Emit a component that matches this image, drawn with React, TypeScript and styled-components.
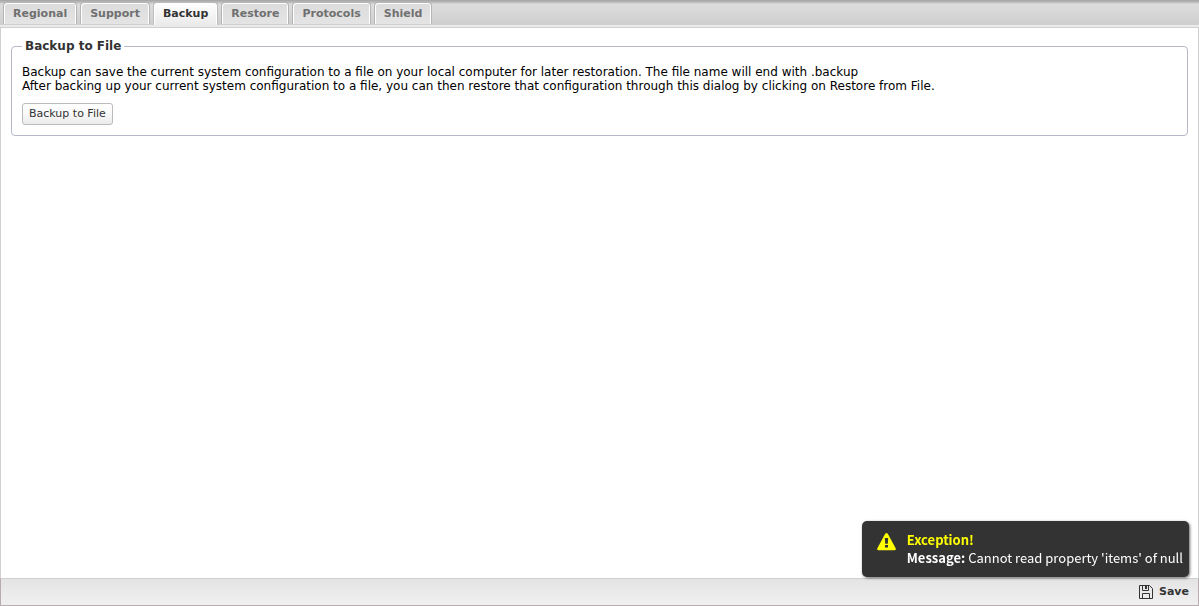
import React, { useState } from "react";
import styled, { createGlobalStyle } from "styled-components";

const GlobalStyle = createGlobalStyle`
  * { box-sizing: border-box; }
  body {
    margin: 0;
    background: #fff;
    font-family: "DejaVu Sans", Verdana, sans-serif;
    font-size: 12px;
    line-height: 14px;
    color: #000;
  }
`;

const Page = styled.div`
  display: flex;
  flex-direction: column;
  min-height: 100vh;
`;

const TabStrip = styled.nav`
  display: flex;
  align-items: flex-end;
  gap: 3px;
  height: 25px;
  padding: 0 3px;
  border-top: 1px solid #a9a9a9;
  border-bottom: 1px solid #d0d0d0;
  background: linear-gradient(#b4b4b4 0, #b4b4b4 1px, #dddddd 3px, #cfcfcf 100%);
`;

const Tab = styled.button<{ $active: boolean }>`
  height: ${(p) => (p.$active ? 23 : 22)}px;
  margin-bottom: ${(p) => (p.$active ? -1 : 0)}px;
  padding: 0 9px ${(p) => (p.$active ? 2 : 0)}px;
  border: 1px solid ${(p) => (p.$active ? "#bcbcbc" : "#b5b5b5")};
  border-bottom: 0;
  border-radius: 4px 4px 0 0;
  background: ${(p) => (p.$active ? "linear-gradient(#ffffff, #eaeaea)" : "linear-gradient(#dcdcdc, #e4e4e4)")};
  box-shadow: inset 1px 1px 0 #fff, inset -1px 0 0 #fff;
  color: ${(p) => (p.$active ? "#333" : "#707070")};
  font: bold 11px/13px "DejaVu Sans", Verdana, sans-serif;
`;

const StripEdge = styled.div`
  height: 3px;
  background: #eaeaea;
  border-bottom: 1px solid #d0d0d0;
`;

const Content = styled.main`
  flex: 1;
  padding: 11px 10px;
  border: solid #d0d0d0;
  border-width: 0 1px;
`;

const Group = styled.fieldset`
  min-width: 0;
  margin: 0;
  padding: 12px 10px 10px;
  border: 1px solid #b5b8c8;
  border-radius: 4px;
`;

const Legend = styled.legend`
  padding: 0 3px;
  color: #333;
  font-weight: bold;
`;

const Description = styled.p`
  margin: 0 0 10px;
`;

const BackupButton = styled.button`
  display: block;
  height: 22px;
  padding: 0 6px 2px;
  border: 1px solid #bbb;
  border-radius: 3px;
  background: linear-gradient(#ffffff, #f8f8f8 50%, #ebebeb);
  color: #333;
  font: 11px/13px "DejaVu Sans", Verdana, sans-serif;
`;

const Footer = styled.footer`
  display: flex;
  align-items: center;
  justify-content: flex-end;
  height: 28px;
  padding: 0 9px;
  border: 1px solid #b8acb0;
  border-top-color: #d0d0d0;
  background: linear-gradient(#e4e4e4, #f0f0f0);
`;

const SaveButton = styled.button`
  display: flex;
  align-items: center;
  gap: 6px;
  padding: 0;
  border: 0;
  background: none;
  color: #333;
  font: bold 11px/14px "DejaVu Sans", Verdana, sans-serif;
`;

const Toast = styled.div`
  position: fixed;
  right: 10px;
  bottom: 29px;
  display: flex;
  gap: 10px;
  padding: 10px 6px 10px 14px;
  border-radius: 5px;
  background: #333;
  box-shadow: 1px 1px 3px rgba(0, 0, 0, 0.6);
  color: #fff;
  font: 13px/18px "Noto Sans CJK SC", sans-serif;
`;

const ToastTitle = styled.strong`
  display: block;
  color: #ff0;
`;

const WarningIcon = () => (
  <svg width="21" height="20" viewBox="0 0 21 20" aria-hidden="true">
    <path
      fill="#ff0"
      fillRule="evenodd"
      d="M9.2 2.8Q10.5 1 11.8 2.8L19.8 17.4Q20.3 19 18.7 19.2H2.3Q.7 19 1.2 17.4ZM8.8 7L9.2 12.8H11.8L12.2 7ZM9 14.1V16.6H12V14.1Z"
    />
  </svg>
);

const SaveIcon = () => (
  <svg width="14" height="14" viewBox="0 0 14 14" fill="none" stroke="#333" aria-hidden="true">
    <path d="M.5.5H10.5L13.5 3.5V13.5H.5ZM3.5 13.5V8.5H10.5V13.5M3.5.5V5.5H9.5V.5" />
    <path fill="#333" stroke="none" d="M6 1H8V4H6Z" />
  </svg>
);

const tabs = ["Regional", "Support", "Backup", "Restore", "Protocols", "Shield"];

export default function App() {
  const [active, setActive] = useState("Backup");
  return (
    <Page>
      <GlobalStyle />
      <TabStrip role="tablist">
        {tabs.map((name) => (
          <Tab key={name} role="tab" aria-selected={name === active} $active={name === active} onClick={() => setActive(name)}>
            {name}
          </Tab>
        ))}
      </TabStrip>
      <StripEdge />
      <Content>
        <Group>
          <Legend>Backup to File</Legend>
          <Description>
            Backup can save the current system configuration to a file on your local computer for later restoration. The file name will end with .backup
            <br />
            After backing up your current system configuration to a file, you can then restore that configuration through this dialog by clicking on Restore from File.
          </Description>
          <BackupButton type="button">Backup to File</BackupButton>
        </Group>
      </Content>
      <Footer>
        <SaveButton type="button">
          <SaveIcon />
          Save
        </SaveButton>
      </Footer>
      <Toast role="alert">
        <WarningIcon />
        <div>
          <ToastTitle>Exception!</ToastTitle>
          <strong>Message:</strong> Cannot read property 'items' of null
        </div>
      </Toast>
    </Page>
  );
}
